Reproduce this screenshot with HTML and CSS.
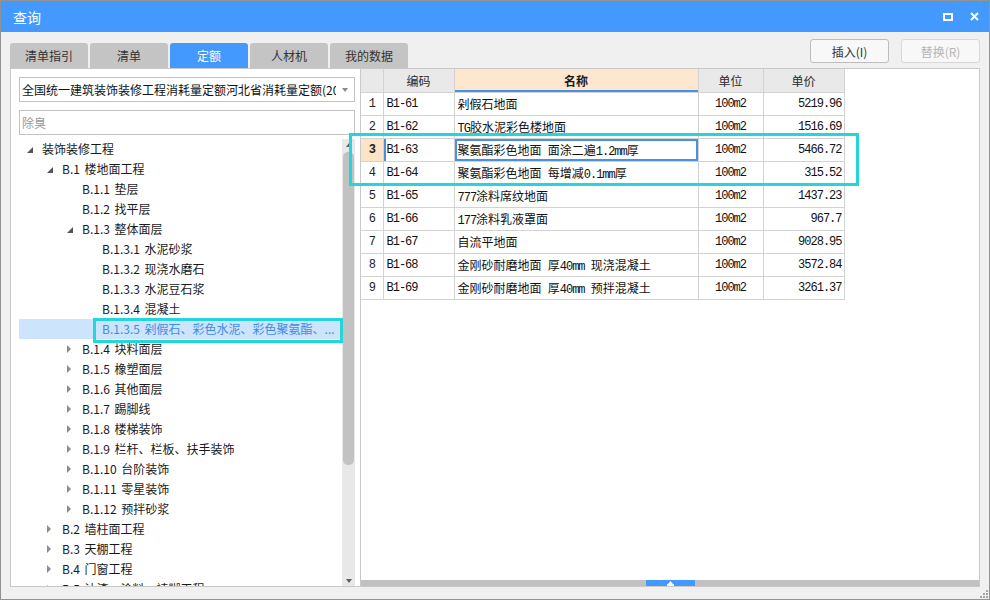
FILE: index.html
```html
<!DOCTYPE html>
<html lang="zh-CN">
<head>
<meta charset="utf-8">
<title>查询</title>
<link rel="stylesheet" href="styles.css">
</head>
<body>
<div class="window">
  <div class="titlebar">
    <span class="title">查询</span>
    <div class="win-ctrls">
      <svg class="ic-max" width="10" height="8" viewBox="0 0 10 8"><rect x="1" y="1" width="8" height="6" fill="none" stroke="#fff" stroke-width="2"/></svg>
      <svg class="ic-close" width="9" height="9" viewBox="0 0 9 9"><path d="M1 1L8 8M8 1L1 8" stroke="#fff" stroke-width="2"/></svg>
    </div>
  </div>
  <div class="main">
    <div class="toprow">
      <div class="tabs">
        <div class="tab">清单指引</div>
        <div class="tab">清单</div>
        <div class="tab active">定额</div>
        <div class="tab">人材机</div>
        <div class="tab">我的数据</div>
      </div>
      <div class="btns">
        <button class="btn">插入(I)</button>
        <button class="btn disabled">替换(R)</button>
      </div>
    </div>
    <div class="panels">
      <div class="left">
        <div class="select"><span class="select-text">全国统一建筑装饰装修工程消耗量定额河北省消耗量定额(2012)</span><span class="caret"></span></div>
        <div class="search">除臭</div>
        <div class="tree">
          <div class="tree-list">
            <div class="row l0 exp"><span class="tog"></span><span class="lbl">装饰装修工程</span></div>
            <div class="row l1 exp"><span class="tog"></span><span class="lbl">B.1 楼地面工程</span></div>
            <div class="row l2"><span class="tog"></span><span class="lbl">B.1.1 垫层</span></div>
            <div class="row l2"><span class="tog"></span><span class="lbl">B.1.2 找平层</span></div>
            <div class="row l2 exp"><span class="tog"></span><span class="lbl">B.1.3 整体面层</span></div>
            <div class="row l3"><span class="tog"></span><span class="lbl">B.1.3.1 水泥砂浆</span></div>
            <div class="row l3"><span class="tog"></span><span class="lbl">B.1.3.2 现浇水磨石</span></div>
            <div class="row l3"><span class="tog"></span><span class="lbl">B.1.3.3 水泥豆石浆</span></div>
            <div class="row l3"><span class="tog"></span><span class="lbl">B.1.3.4 混凝土</span></div>
            <div class="row l3 sel"><span class="tog"></span><span class="lbl">B.1.3.5 剁假石、彩色水泥、彩色聚氨酯、...</span></div>
            <div class="row l2 col"><span class="tog"></span><span class="lbl">B.1.4 块料面层</span></div>
            <div class="row l2 col"><span class="tog"></span><span class="lbl">B.1.5 橡塑面层</span></div>
            <div class="row l2 col"><span class="tog"></span><span class="lbl">B.1.6 其他面层</span></div>
            <div class="row l2 col"><span class="tog"></span><span class="lbl">B.1.7 踢脚线</span></div>
            <div class="row l2 col"><span class="tog"></span><span class="lbl">B.1.8 楼梯装饰</span></div>
            <div class="row l2 col"><span class="tog"></span><span class="lbl">B.1.9 栏杆、栏板、扶手装饰</span></div>
            <div class="row l2 col"><span class="tog"></span><span class="lbl">B.1.10 台阶装饰</span></div>
            <div class="row l2 col"><span class="tog"></span><span class="lbl">B.1.11 零星装饰</span></div>
            <div class="row l2 col"><span class="tog"></span><span class="lbl">B.1.12 预拌砂浆</span></div>
            <div class="row l1 col"><span class="tog"></span><span class="lbl">B.2 墙柱面工程</span></div>
            <div class="row l1 col"><span class="tog"></span><span class="lbl">B.3 天棚工程</span></div>
            <div class="row l1 col"><span class="tog"></span><span class="lbl">B.4 门窗工程</span></div>
            <div class="row l1 col"><span class="tog"></span><span class="lbl">B.5 油漆、涂料、裱糊工程</span></div>
          </div>
          <div class="vscroll">
            <span class="arrow-up"></span>
            <span class="thumb"></span>
            <span class="arrow-down"></span>
          </div>
        </div>
      </div>
      <div class="right">
        <table class="grid">
          <colgroup>
            <col class="c-no"><col class="c-code"><col class="c-name"><col class="c-unit"><col class="c-price">
          </colgroup>
          <thead>
            <tr><th></th><th>编码</th><th class="hot">名称</th><th>单位</th><th>单价</th></tr>
          </thead>
          <tbody>
            <tr><td class="no">1</td><td class="code">B1-61</td><td class="name">剁假石地面</td><td class="unit">100m2</td><td class="price">5219.96</td></tr>
            <tr><td class="no">2</td><td class="code">B1-62</td><td class="name"><span class="a">TG</span>胶水泥彩色楼地面</td><td class="unit">100m2</td><td class="price">1516.69</td></tr>
            <tr class="cur"><td class="no">3</td><td class="code">B1-63</td><td class="name">聚氨酯彩色地面<span class="a"> </span>面涂二遍<span class="a">1.2mm</span>厚</td><td class="unit">100m2</td><td class="price">5466.72</td></tr>
            <tr><td class="no">4</td><td class="code">B1-64</td><td class="name">聚氨酯彩色地面<span class="a"> </span>每增减<span class="a">0.1mm</span>厚</td><td class="unit">100m2</td><td class="price">315.52</td></tr>
            <tr><td class="no">5</td><td class="code">B1-65</td><td class="name"><span class="a">777</span>涂料席纹地面</td><td class="unit">100m2</td><td class="price">1437.23</td></tr>
            <tr><td class="no">6</td><td class="code">B1-66</td><td class="name"><span class="a">177</span>涂料乳液罩面</td><td class="unit">100m2</td><td class="price">967.7</td></tr>
            <tr><td class="no">7</td><td class="code">B1-67</td><td class="name">自流平地面</td><td class="unit">100m2</td><td class="price">9028.95</td></tr>
            <tr><td class="no">8</td><td class="code">B1-68</td><td class="name">金刚砂耐磨地面<span class="a"> </span>厚<span class="a">40mm </span>现浇混凝土</td><td class="unit">100m2</td><td class="price">3572.84</td></tr>
            <tr><td class="no">9</td><td class="code">B1-69</td><td class="name">金刚砂耐磨地面<span class="a"> </span>厚<span class="a">40mm </span>预拌混凝土</td><td class="unit">100m2</td><td class="price">3261.37</td></tr>
          </tbody>
        </table>
        <div class="hscroll">
          <div class="hthumb">
            <svg width="7" height="5" viewBox="0 0 7 5"><path d="M3.5 0L6 3H1Z" fill="#fff"/><rect x="0" y="3" width="7" height="2" fill="#fff"/></svg>
          </div>
        </div>
      </div>
    </div>
  </div>
  <div class="mark mark-tree"></div>
  <div class="mark mark-rows"></div>
  <svg class="grip" width="10" height="10" viewBox="0 0 10 10">
    <rect x="8" y="2" width="2" height="2" fill="#a6a6a6"/>
    <rect x="5" y="5" width="2" height="2" fill="#a6a6a6"/>
    <rect x="8" y="5" width="2" height="2" fill="#a6a6a6"/>
    <rect x="2" y="8" width="2" height="2" fill="#a6a6a6"/>
    <rect x="5" y="8" width="2" height="2" fill="#a6a6a6"/>
    <rect x="8" y="8" width="2" height="2" fill="#a6a6a6"/>
  </svg>
</div>
</body>
</html>
```

FILE: styles.css
```css
* { box-sizing: border-box; }
html, body { margin: 0; padding: 0; }
body {
  width: 990px;
  height: 600px;
  overflow: hidden;
  font-family: "Noto Sans CJK SC", "Noto Sans", sans-serif;
  font-size: 12px;
  color: #1e1e1e;
}
.window {
  position: relative;
  width: 990px;
  height: 600px;
  border: 1px solid #929292;
  background: #f0f0f0;
  display: flex;
  flex-direction: column;
}
.titlebar {
  flex: none;
  height: 31px;
  background: #4499ff;
  display: flex;
  align-items: center;
  justify-content: space-between;
  padding: 0 10px 0 12px;
}
.title { color: #fff; font-size: 14px; line-height: 1; }
.win-ctrls { display: flex; align-items: center; gap: 17px; }
.ic-max, .ic-close { display: block; }

.main {
  flex: 1;
  display: flex;
  flex-direction: column;
  padding: 7px 9px 0 9px;
}
.toprow {
  flex: none;
  height: 29px;
  display: flex;
  justify-content: space-between;
}
.tabs { display: flex; gap: 2px; align-self: flex-end; }
.tab {
  width: 78px;
  height: 25px;
  background: #c4c4c4;
  border-radius: 3px 3px 0 0;
  display: flex;
  align-items: center;
  justify-content: center;
  color: #333;
  font-size: 12px;
}
.tab.active { background: #4499ff; color: #fff; }
.btns { display: flex; gap: 12px; align-self: flex-start; }
.btn {
  width: 79px;
  height: 24px;
  padding: 0;
  border: 1px solid #bdbdbd;
  border-radius: 3px;
  background: #f8f8f8;
  font-family: inherit;
  font-size: 12px;
  color: #333;
}
.btn.disabled { color: #b5b5b5; border-color: #d8d8d8; }

.panels { flex: none; height: 519px; display: flex; }
.left {
  width: 351px;
  background: #fff;
  border: 1px solid #c9c9c9;
  padding: 8px 5px 0 8px;
  display: flex;
  flex-direction: column;
}
.select {
  flex: none;
  height: 25px;
  border: 1px solid #c3c3c3;
  display: flex;
  align-items: center;
  padding-left: 2px;
}
.select-text { flex: 1; min-width: 0; overflow: hidden; white-space: nowrap; color: #111; }
.caret { width: 18px; height: 100%; position: relative; flex: none; }
.caret::after {
  content: "";
  position: absolute;
  left: 6px;
  top: 10px;
  border-left: 3.5px solid transparent;
  border-right: 3.5px solid transparent;
  border-top: 4px solid #8a8a8a;
}
.search {
  flex: none;
  margin-top: 8px;
  height: 25px;
  border: 1px solid #c3c3c3;
  padding-left: 2px;
  line-height: 23px;
  color: #9a9a9a;
}
.tree { flex: 1; min-height: 0; margin-top: 4px; display: flex; }
.tree-list { flex: 1; min-width: 0; overflow: hidden; }
.row {
  height: 20px;
  display: flex;
  align-items: center;
  white-space: nowrap;
  color: #1a1a1a;
}
.row.l1 { padding-left: 20px; }
.row.l2 { padding-left: 40px; }
.row.l3 { padding-left: 60px; }
.tog { width: 23px; height: 20px; flex: none; position: relative; }
.row.exp .tog::before {
  content: "";
  position: absolute;
  left: 8px;
  top: 8px;
  border-left: 6px solid transparent;
  border-bottom: 6px solid #555;
}
.row.col .tog::before {
  content: "";
  position: absolute;
  left: 8px;
  top: 6px;
  border-top: 4px solid transparent;
  border-bottom: 4px solid transparent;
  border-left: 4px solid #8c8c8c;
}
.lbl { line-height: 20px; word-spacing: 2px; }
.row.sel { background: #cce4fc; }
.row.sel .lbl { color: #3d8de6; }

.vscroll {
  width: 13px;
  flex: none;
  background: #e8e8e8;
  display: flex;
  flex-direction: column;
  align-items: center;
}
.arrow-up {
  margin-top: 4px;
  border-left: 3.5px solid transparent;
  border-right: 3.5px solid transparent;
  border-bottom: 4px solid #606060;
}
.thumb {
  margin-top: 5px;
  width: 11px;
  height: 313px;
  border-radius: 5px;
  background: #c2c2c2;
}
.arrow-down {
  margin-top: auto;
  margin-bottom: 3px;
  border-left: 3.5px solid transparent;
  border-right: 3.5px solid transparent;
  border-top: 4px solid #606060;
}

.right {
  flex: 1;
  background: #fff;
  border: 1px solid #c9c9c9;
  border-left: 0;
  display: flex;
  flex-direction: column;
}
.grid {
  border-collapse: collapse;
  table-layout: fixed;
  width: 483px;
  font-family: "Liberation Mono", "Noto Sans CJK SC", monospace;
  font-size: 12px;
  color: #111;
}
.c-no { width: 22px; }
.c-code { width: 71px; }
.c-name { width: 244px; }
.c-unit { width: 65px; }
.c-price { width: 81px; }
.grid th, .grid td {
  border: 1px solid #d3d3d3;
  height: 23px;
  padding: 0 2px;
  white-space: nowrap;
  overflow: hidden;
}
.grid tr > :first-child { border-left: 0; }
.grid thead th { border-top: 0; }
.grid th {
  background: #e9e9e9;
  font-family: "Noto Sans CJK SC", sans-serif;
  font-weight: normal;
  color: #2a2a2a;
}
.grid th.hot {
  background: #fde8cf;
  font-weight: bold;
  color: #1a1a1a;
  box-shadow: inset 0 -2px 0 #4a90e2;
}
.grid td.no { text-align: center; padding: 0; letter-spacing: -1px; color: #222; }
.grid td.code { letter-spacing: -1px; padding-left: 3px; }
.grid td.name { padding-left: 3px; }
.grid td.unit { text-align: center; letter-spacing: -1px; }
.grid td.price { text-align: right; letter-spacing: -1px; padding-right: 2px; }
.a { letter-spacing: -1px; }
.grid tr.cur td.no { background: #fde4c6; font-weight: bold; }
.grid tr.cur td.code { box-shadow: inset 2px 0 0 #4a90e2; }
.grid tr.cur td.name { box-shadow: inset 0 0 0 2px #4a90e2; }

.hscroll {
  margin-top: auto;
  height: 6px;
  background: #c1c1c1;
  display: flex;
  justify-content: center;
}
.hthumb {
  width: 49px;
  height: 6px;
  background: #4499ff;
  display: flex;
  justify-content: center;
  align-items: flex-end;
}
.hthumb svg { display: block; }

.mark {
  position: absolute;
  border: 3px solid #22d6d9;
  pointer-events: none;
}
.mark-tree { left: 92px; top: 317px; width: 250px; height: 25px; }
.mark-rows { left: 348px; top: 132px; width: 510px; height: 53px; }
.grip { position: absolute; right: 1px; bottom: 1px; }
```
